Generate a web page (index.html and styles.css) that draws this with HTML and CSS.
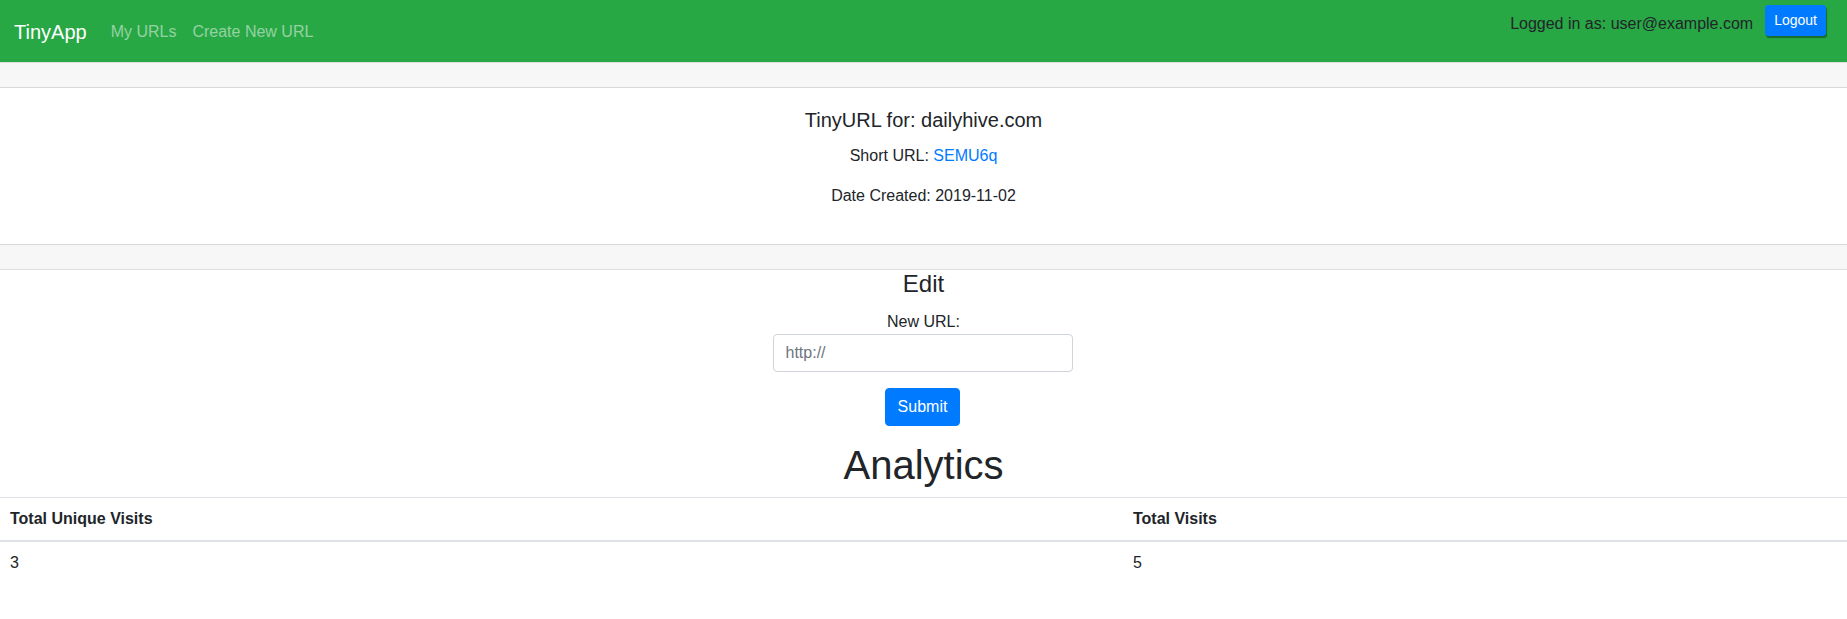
FILE: index.html
```html
<!DOCTYPE html>
<html lang="en">
<head>
<meta charset="utf-8">
<title>TinyApp</title>
<link rel="stylesheet" href="styles.css">
</head>
<body>
<nav class="navbar">
  <div class="nav-left">
    <a class="brand" href="#">TinyApp</a>
    <a class="nav-link" href="#">My URLs</a>
    <a class="nav-link" href="#">Create New URL</a>
  </div>
  <div class="nav-right">
    <span class="logged">Logged in as: user@example.com</span>
    <button class="btn-logout" type="button">Logout</button>
  </div>
</nav>

<div class="card">
  <div class="card-header"></div>
  <div class="card-body">
    <h5 class="card-title">TinyURL for: dailyhive.com</h5>
    <p class="card-text">Short URL: <a href="#" class="link">SEMU6q</a></p>
    <p class="card-text">Date Created: 2019-11-02</p>
  </div>
  <div class="card-footer"></div>
</div>

<section class="edit">
  <h4 class="edit-title">Edit</h4>
  <form class="edit-form">
    <label class="edit-label" for="newurl">New URL:</label>
    <input class="edit-input" id="newurl" type="text" placeholder="http://">
    <button class="btn-submit" type="button">Submit</button>
  </form>
</section>

<h1 class="analytics-title">Analytics</h1>
<table class="stats">
  <thead>
    <tr><th class="col-unique">Total Unique Visits</th><th>Total Visits</th></tr>
  </thead>
  <tbody>
    <tr><td>3</td><td>5</td></tr>
  </tbody>
</table>
</body>
</html>
```

FILE: styles.css
```css
* { box-sizing: border-box; }
html, body { margin: 0; padding: 0; }
body {
  font-family: "Liberation Sans", Arial, sans-serif;
  font-size: 16px;
  line-height: 1.5;
  color: #212529;
  background: #fff;
}

.navbar {
  height: 62px;
  background: #28a745;
  display: flex;
  justify-content: space-between;
  padding: 0 21px 0 14px;
}
.nav-left {
  display: flex;
  align-items: center;
  padding-top: 1px;
}
.brand {
  color: #fff;
  font-size: 20px;
  line-height: 30px;
  padding: 5px 0;
  margin-right: 16px;
  text-decoration: none;
}
.nav-link {
  color: rgba(255,255,255,.5);
  padding: 8px;
  line-height: 24px;
  text-decoration: none;
}
.nav-right {
  display: flex;
  align-items: flex-start;
  padding-top: 5px;
}
.logged {
  margin-top: 7px;
  line-height: 24px;
  color: #212529;
  margin-right: 12px;
}
.btn-logout {
  font-family: inherit;
  font-size: 14px;
  line-height: 21px;
  padding: 4px 8px;
  color: #fff;
  background: #007bff;
  border: 1px solid #007bff;
  border-radius: 3px;
  box-shadow: 1px 2px 1px rgba(0,0,0,.35);
}

.card {
  border-top: 1px solid rgba(0,0,0,.125);
  border-bottom: 1px solid rgba(0,0,0,.125);
  text-align: center;
}
.card-header {
  height: 25px;
  background: rgba(0,0,0,.03);
  border-bottom: 1px solid rgba(0,0,0,.125);
}
.card-body {
  padding: 20px;
}
.card-title {
  margin: 0 0 12px;
  font-size: 20px;
  font-weight: 500;
  line-height: 1.2;
}
.card-text {
  margin: 0 0 16px;
}
.link { color: #007bff; text-decoration: none; }
.card-footer {
  height: 25px;
  background: rgba(0,0,0,.03);
  border-top: 1px solid rgba(0,0,0,.125);
}

.edit {
  text-align: center;
}
.edit-title {
  margin: 0 0 11px;
  font-size: 24px;
  font-weight: 500;
  line-height: 1.2;
}
.edit-form {
  display: flex;
  flex-direction: column;
  align-items: center;
  margin-bottom: 15.5px;
}
.edit-label {
  display: block;
  line-height: 24px;
}
.edit-input {
  width: 300px;
  height: 38px;
  padding: 6px 12px;
  font-family: inherit;
  font-size: 16px;
  color: #495057;
  border: 1px solid #ced4da;
  border-radius: 4px;
  margin: 0 2px 16px 0;
}
.edit-input::placeholder { color: #6c757d; }
.btn-submit {
  font-family: inherit;
  font-size: 16px;
  line-height: 24px;
  padding: 6px 12px;
  margin-right: 2px;
  color: #fff;
  background: #007bff;
  border: 1px solid #007bff;
  border-radius: 4px;
}

.analytics-title {
  margin: 0 0 8px;
  text-align: center;
  font-size: 40px;
  font-weight: 500;
  line-height: 1.2;
}

.stats {
  width: 100%;
  border-collapse: collapse;
  margin-bottom: 16px;
}
.stats th, .stats td {
  padding: 12px 10px;
  line-height: normal;
  text-align: left;
  vertical-align: top;
  border-top: 1px solid #dee2e6;
}
.stats thead th {
  border-bottom: 2px solid #dee2e6;
  font-weight: 700;
}
.col-unique { width: 60.8%; }
```
